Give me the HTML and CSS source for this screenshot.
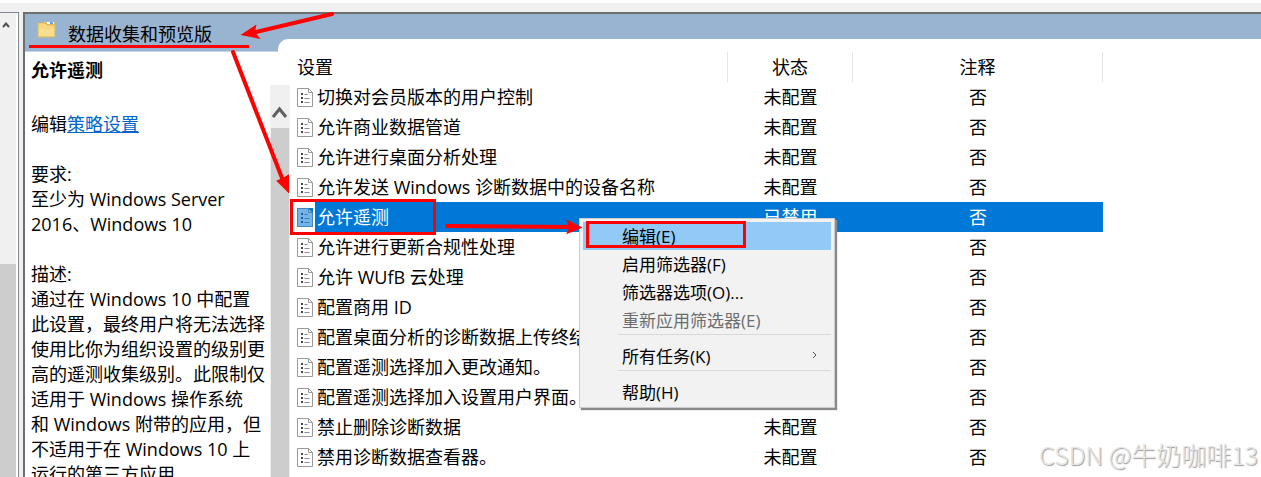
FILE: index.html
```html
<!DOCTYPE html>
<html lang="zh-CN">
<head>
    <meta charset="utf-8">
    <title>数据收集和预览版</title>
    <link rel="stylesheet" href="styles.css">
</head>
<body>
<svg class="defs" width="0" height="0" aria-hidden="true">
    <symbol id="policy" viewBox="0 0 16 19">
        <path class="page" d="M.5.5h11l4 4v14H.5z"/>
        <path class="fold" d="M11.5.5v4h4"/>
        <path class="dots" d="M4 5h2v2H4zM4 9h2v2H4zM4 13h2v2H4z"/>
        <path class="lines" d="M7.500 6.500h3M7.500 10.500h5M7.500 14.500h5"/>
    </symbol>
</svg>
<div class="window">
    <div class="tree">
        <div class="tree-scroll">
            <svg class="tree-up" viewBox="0 0 8 6"><path d="M1 5l3-3.500L7 5"/></svg>
            <div class="tree-thumb"></div>
        </div>
    </div>
    <div class="panel">
        <div class="panel-header">
            <svg class="folder" viewBox="0 0 19 17">
                <path d="M8 1h10v6H8z" fill="#e8bd57"/>
                <path d="M10 1h7v2h-7z" fill="#fff"/>
                <path d="M13 1h3v2h-3z" fill="#65a9dc"/>
                <path d="M1 2h7l2 2h8v12H1z" fill="#f6d67e" stroke="#dfb95e"/>
                <path d="M2 8h15v7H2z" fill="#f8de91"/>
            </svg>
            <span>数据收集和预览版</span>
        </div>
        <div class="panel-body">
            <div class="details">
                <div class="details-text">
                    <h2>允许遥测</h2>
                    <p>编辑<a href="#">策略设置</a></p>
                    <p>要求:<br>至少为 Windows Server<br>2016、Windows 10</p>
                    <p>描述:<br>通过在 Windows 10 中配置<br>此设置，最终用户将无法选择<br>使用比你为组织设置的级别更<br>高的遥测收集级别。此限制仅<br>适用于 Windows 操作系统<br>和 Windows 附带的应用，但<br>不适用于在 Windows 10 上<br>运行的第三方应用</p>
                </div>
                <div class="details-scroll">
                    <svg viewBox="0 0 20 43"><path d="M3 32l6.500-8 6.500 8"/></svg>
                    <div class="details-thumb"></div>
                </div>
            </div>
            <div class="list">
                <table>
                    <thead>
                        <tr><th class="name">设置</th><th class="state">状态</th><th class="note">注释</th></tr>
                    </thead>
                    <tbody>
                        <tr><td><svg class="icon"><use href="#policy"/></svg><span>切换对会员版本的用户控制</span></td><td>未配置</td><td>否</td></tr>
                        <tr><td><svg class="icon"><use href="#policy"/></svg><span>允许商业数据管道</span></td><td>未配置</td><td>否</td></tr>
                        <tr><td><svg class="icon"><use href="#policy"/></svg><span>允许进行桌面分析处理</span></td><td>未配置</td><td>否</td></tr>
                        <tr><td><svg class="icon"><use href="#policy"/></svg><span>允许发送 Windows 诊断数据中的设备名称</span></td><td>未配置</td><td>否</td></tr>
                        <tr class="selected"><td><svg class="icon"><use href="#policy"/></svg><span>允许遥测</span></td><td>已禁用</td><td>否</td></tr>
                        <tr><td><svg class="icon"><use href="#policy"/></svg><span>允许进行更新合规性处理</span></td><td></td><td>否</td></tr>
                        <tr><td><svg class="icon"><use href="#policy"/></svg><span>允许 WUfB 云处理</span></td><td></td><td>否</td></tr>
                        <tr><td><svg class="icon"><use href="#policy"/></svg><span>配置商用 ID</span></td><td></td><td>否</td></tr>
                        <tr><td><svg class="icon"><use href="#policy"/></svg><span>配置桌面分析的诊断数据上传终结</span></td><td></td><td>否</td></tr>
                        <tr><td><svg class="icon"><use href="#policy"/></svg><span>配置遥测选择加入更改通知。</span></td><td></td><td>否</td></tr>
                        <tr><td><svg class="icon"><use href="#policy"/></svg><span>配置遥测选择加入设置用户界面。</span></td><td></td><td>否</td></tr>
                        <tr><td><svg class="icon"><use href="#policy"/></svg><span>禁止删除诊断数据</span></td><td>未配置</td><td>否</td></tr>
                        <tr><td><svg class="icon"><use href="#policy"/></svg><span>禁用诊断数据查看器。</span></td><td>未配置</td><td>否</td></tr>
                    </tbody>
                </table>
            </div>
        </div>
    </div>
</div>

<div class="menu">
    <button class="active">编辑(E)</button>
    <button>启用筛选器(F)</button>
    <button>筛选器选项(O)...</button>
    <button disabled>重新应用筛选器(E)</button>
    <hr>
    <button>所有任务(K)<svg class="sub" viewBox="0 0 5 8"><path d="M1 1l3 3-3 3"/></svg></button>
    <hr>
    <button>帮助(H)</button>
</div>

<!-- red marks -->
<svg class="marks" width="760" height="260" aria-hidden="true">
    <path d="M29 46.500h220" stroke-width="3"/>
    <path d="M332 14L256 32M233 52l49 126M447 226l123 1" stroke-width="4" stroke-linecap="round"/>
    <path class="head" d="M243 34.500l12-8-1 6 4 5z"/>
    <path class="head" d="M288 191l-10-10 5-2 5-3z"/>
    <path class="head" d="M580 227.500l-12 5 2-5-2-6z"/>
    <path d="M291.500 200.500h143v33h-143zM587.500 222.500h157v24h-157z" stroke-width="3"/>
</svg>

<div class="watermark">CSDN @牛奶咖啡13</div>
</body>
</html>
```

FILE: styles.css
```css
* {
    box-sizing: border-box;
}
body {
    margin: 0;
    height: 100vh;
    overflow: hidden;
    position: relative;
    background-color: #f0f0f0;
    border-top: 3px solid #fff;
    font-family: "Open Sans", "Noto Sans CJK SC", sans-serif;
    font-size: 18px;
    color: #000;
}
.defs {
    position: absolute;
}
.window {
    display: flex;
    gap: 4px;
    height: 100%;
    padding-top: 9px;
}

/* left tree */
.tree {
    width: 19px;
    background-color: #fff;
    border-top: 1px solid #828790;
    border-right: 1px solid #828790;
}
.tree-scroll {
    display: flex;
    flex-direction: column;
    width: 16px;
    height: 100%;
    background-color: #f0f0f0;
}
.tree-up {
    width: 8px;
    height: 6px;
    margin: 9px 2px 0;
    fill: none;
    stroke: #505050;
    stroke-width: 2;
}
.tree-thumb {
    flex: 1;
    margin-top: 236px;
    background-color: #cdcdcd;
}

/* right panel */
.panel {
    flex: 1;
    display: flex;
    flex-direction: column;
    min-width: 0;
    background-color: #fff;
    border-top: 2px solid #6e6e6e;
    border-left: 2px solid #6e6e6e;
}
.panel-header {
    display: flex;
    align-items: center;
    gap: 12px;
    height: 38px;
    padding: 0 12px;
    background-color: #99b4d1;
    border-bottom: 1px solid #c6d6e8;
}
.folder {
    width: 19px;
    height: 17px;
    margin-bottom: 6px;
}
.panel-body {
    flex: 1;
    display: flex;
    min-height: 0;
}
.details {
    display: flex;
    width: 265px;
    overflow: hidden;
}
.details-text {
    flex: 1;
    min-width: 0;
    padding: 6px 0 0 6px;
    line-height: 25px;
    white-space: nowrap;
}
.details-text h2 {
    margin: 0 0 29px;
    font-size: 18px;
    line-height: 25px;
}
.details-text p {
    margin: 0 0 25px;
}
.details-text a {
    color: #0066cc;
}
.details-scroll {
    display: flex;
    flex-direction: column;
    width: 20px;
    margin-top: 33px;
    background-color: #f0f0f0;
}
.details-scroll svg {
    flex: none;
    width: 20px;
    height: 43px;
    fill: none;
    stroke: #606060;
    stroke-width: 3;
}
.details-thumb {
    flex: 1;
    margin: 0 1px;
    background-color: #cdcdcd;
}
.list {
    flex: 1;
    position: relative;
}
.list::before {
    content: "";
    position: absolute;
    top: -13px;
    left: -12px;
    right: 0;
    height: 13px;
    background-color: #fff;
    border-top-left-radius: 10px;
}

/* policy table */
table {
    width: 813px;
    table-layout: fixed;
    border-collapse: separate;
    border-spacing: 0;
}
th, td {
    height: 30px;
    padding: 0;
    line-height: 30px;
    font-weight: normal;
    text-align: center;
    white-space: nowrap;
}
th {
    border-right: 1px solid #e5e5e5;
}
.name {
    width: 438px;
    padding-left: 7px;
    text-align: left;
}
.state {
    width: 125px;
}
td:first-child {
    display: flex;
    align-items: center;
    padding-left: 7px;
}
td:first-child span {
    padding: 0 2px;
}
.icon {
    width: 16px;
    height: 19px;
    margin-right: 2px;
}
.page {
    fill: #fff;
    stroke: #9a9a9a;
}
.fold {
    fill: none;
    stroke: #9a9a9a;
}
.dots {
    fill: #444;
}
.lines {
    fill: none;
    stroke: #8888a0;
}
.selected td {
    background-color: #0078d7;
    color: #fff;
}
.selected td:first-child {
    background: linear-gradient(to right, #fff 25px, #0078d7 25px);
}
.selected .icon {
    background-color: #0078d7;
}
.selected .icon use {
    opacity: 0.45;
}

/* context menu */
.menu {
    position: absolute;
    left: 579px;
    top: 215px;
    width: 256px;
    padding: 3px 3px 1px;
    background-color: #f2f2f2;
    border: 1px solid #ccc;
    box-shadow: 2px 2px 1px #8a8a8a;
}
.menu button {
    display: flex;
    align-items: center;
    justify-content: space-between;
    width: 100%;
    height: 28px;
    padding: 0 14px 2px 39px;
    border: none;
    background: none;
    font: inherit;
    font-size: 17px;
    color: #000;
}
.menu .active {
    background-color: #91c9f7;
}
.menu button:disabled {
    color: #6d6d6d;
}
.menu hr {
    height: 1px;
    margin: 0 0 7px 35px;
    border: none;
    background-color: #d9d9d9;
}
.sub {
    width: 5px;
    height: 8px;
    fill: none;
    stroke: #555;
}

.marks {
    position: absolute;
    top: -3px;
    left: 0;
    fill: none;
    stroke: #f00;
    pointer-events: none;
}
.marks .head {
    fill: #f00;
    stroke-width: 2;
}
.watermark {
    position: absolute;
    right: 3px;
    bottom: 5px;
    font-family: "Noto Sans CJK SC", sans-serif;
    font-size: 25px;
    font-weight: 300;
    line-height: 36px;
    color: #e6e6e6;
    text-shadow: 1px 1px 1px #999;
}
```
